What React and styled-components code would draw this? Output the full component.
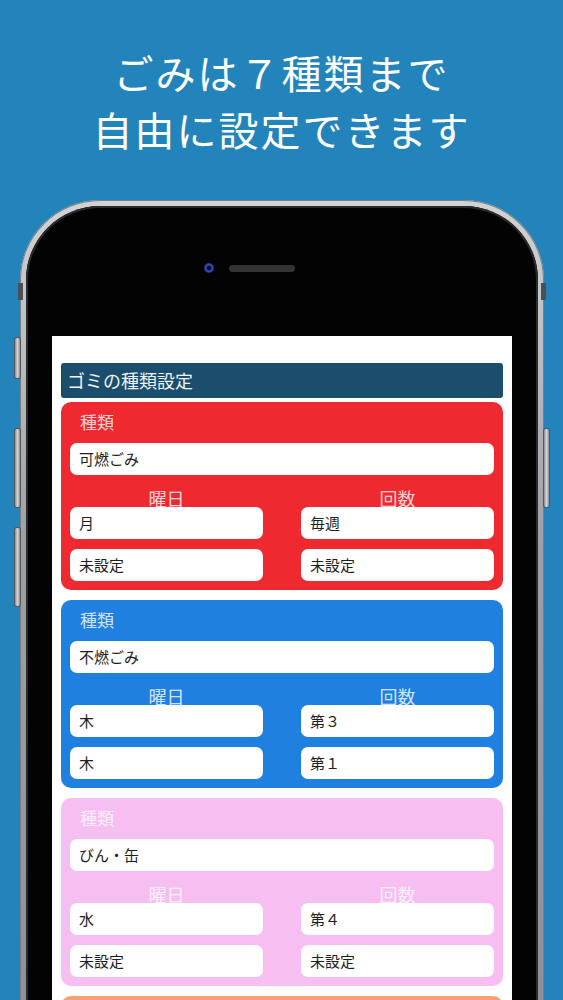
import React from 'react';
import styled, { createGlobalStyle } from 'styled-components';

const GlobalStyle = createGlobalStyle`
  html, body {
    margin: 0;
    padding: 0;
  }
  body {
    font-family: 'Noto Sans CJK JP', 'Noto Sans', sans-serif;
  }
`;

const Page = styled.div`
  width: 563px;
  height: 1000px;
  overflow: hidden;
  background: #2384bb;
  display: flex;
  flex-direction: column;
`;

const Headline = styled.h1`
  margin: 0;
  padding-top: 44px;
  font-size: 40px;
  font-weight: 400;
  line-height: 57px;
  letter-spacing: 2px;
  color: #ffffff;
  text-align: center;
`;

const Phone = styled.div`
  position: relative;
  margin: 42px 0 0 20px;
  width: 524px;
  flex: 1;
  padding: 6px 6px 0 6px;
  box-sizing: border-box;
  border-radius: 80px 80px 0 0;
  background: linear-gradient(to bottom, #d2d3d5, #9fa0a3 40%, #8e8f92);
  box-shadow: inset 0 0 0 1px #7c7d80;
`;

const SideButton = styled.div`
  position: absolute;
  width: 5px;
  border-radius: 2px;
  background: linear-gradient(to right, #8a8b8e, #d4d5d7, #8a8b8e);
  box-shadow: 0 0 0 1px #55565a;
  left: ${(p) => (p.$side === 'right' ? 'auto' : '-5px')};
  right: ${(p) => (p.$side === 'right' ? '-5px' : 'auto')};
  top: ${(p) => p.$top}px;
  height: ${(p) => p.$h}px;
`;

const Antenna = styled.div`
  position: absolute;
  top: 83px;
  width: 5px;
  height: 17px;
  background: #4b5056;
  left: ${(p) => (p.$side === 'right' ? 'auto' : '-2px')};
  right: ${(p) => (p.$side === 'right' ? '-2px' : 'auto')};
`;

const Bezel = styled.div`
  height: 100%;
  padding: 0 26px;
  box-sizing: border-box;
  background: #030303;
  border-radius: 74px 74px 0 0;
  box-shadow: inset 0 0 0 2px #2b2b2e;
`;

const TopBar = styled.div`
  height: 130px;
  padding-bottom: 6px;
  box-sizing: border-box;
  display: flex;
  align-items: center;
`;

const Camera = styled.div`
  margin-left: 152px;
  width: 10px;
  height: 10px;
  border-radius: 50%;
  background: radial-gradient(circle, #0a0d2e 0%, #0a0d2e 25%, #3b4fd0 45%, #22307e 65%, #0b0d20 100%);
`;

const Speaker = styled.div`
  margin-left: 15px;
  width: 66px;
  height: 7px;
  border-radius: 4px;
  background: #333336;
`;

const Screen = styled.div`
  background: #ffffff;
  height: 100%;
  padding: 27px 9px 0 9px;
  box-sizing: border-box;
  display: flex;
  flex-direction: column;
`;

const Header = styled.div`
  height: 35px;
  line-height: 35px;
  padding-left: 6px;
  border-radius: 3px;
  background: #1b4e6d;
  color: #eef3f6;
  font-size: 18px;
  margin-bottom: 4px;
`;

const CardList = styled.div`
  display: flex;
  flex-direction: column;
  gap: 10px;
`;

const Card = styled.div`
  background: ${(p) => p.$color};
  border-radius: 10px;
  padding: 5px 9px 9px 9px;
  height: ${(p) => (p.$peek ? '40px' : 'auto')};
`;

const KindLabel = styled.div`
  padding-left: 10px;
  line-height: 30px;
  margin-bottom: 6px;
  font-size: 17px;
  color: rgba(255, 255, 255, 0.8);
`;

const Field = styled.div`
  height: 32px;
  line-height: 32px;
  padding-left: 9px;
  border-radius: 7px;
  background: #ffffff;
  color: #1e1e1e;
  font-size: 15px;
`;

const Grid = styled.div`
  display: grid;
  grid-template-columns: 1fr 1fr;
  column-gap: 38px;
  row-gap: 10px;
`;

const ColLabel = styled.div`
  height: 32px;
  margin-bottom: -10px;
  display: flex;
  align-items: flex-end;
  justify-content: center;
  font-size: 18px;
  line-height: 1;
  color: rgba(255, 255, 255, 0.8);
`;

const cards = [
  { color: '#ee2a30', kind: '可燃ごみ', days: ['月', '未設定'], counts: ['毎週', '未設定'] },
  { color: '#1f80e0', kind: '不燃ごみ', days: ['木', '木'], counts: ['第３', '第１'] },
  { color: '#f6bef1', kind: 'びん・缶', days: ['水', '未設定'], counts: ['第４', '未設定'] },
];

const GarbageCard = ({ color, kind, days, counts }) => (
  <Card $color={color}>
    <KindLabel>種類</KindLabel>
    <Field>{kind}</Field>
    <Grid>
      <ColLabel>曜日</ColLabel>
      <ColLabel>回数</ColLabel>
      <Field>{days[0]}</Field>
      <Field>{counts[0]}</Field>
      <Field>{days[1]}</Field>
      <Field>{counts[1]}</Field>
    </Grid>
  </Card>
);

const App = () => {
  return (
    <Page>
      <GlobalStyle />
      <Headline>
        ごみは７種類まで
        <br />
        自由に設定できます
      </Headline>
      <Phone>
        <Antenna />
        <Antenna $side="right" />
        <SideButton $top={138} $h={40} />
        <SideButton $top={229} $h={78} />
        <SideButton $top={328} $h={78} />
        <SideButton $side="right" $top={229} $h={78} />
        <Bezel>
          <TopBar>
            <Camera />
            <Speaker />
          </TopBar>
          <Screen>
            <Header>ゴミの種類設定</Header>
            <CardList>
              {cards.map((c) => (
                <GarbageCard key={c.kind} {...c} />
              ))}
              <Card $color="#f5a174" $peek />
            </CardList>
          </Screen>
        </Bezel>
      </Phone>
    </Page>
  );
};

export default App;
